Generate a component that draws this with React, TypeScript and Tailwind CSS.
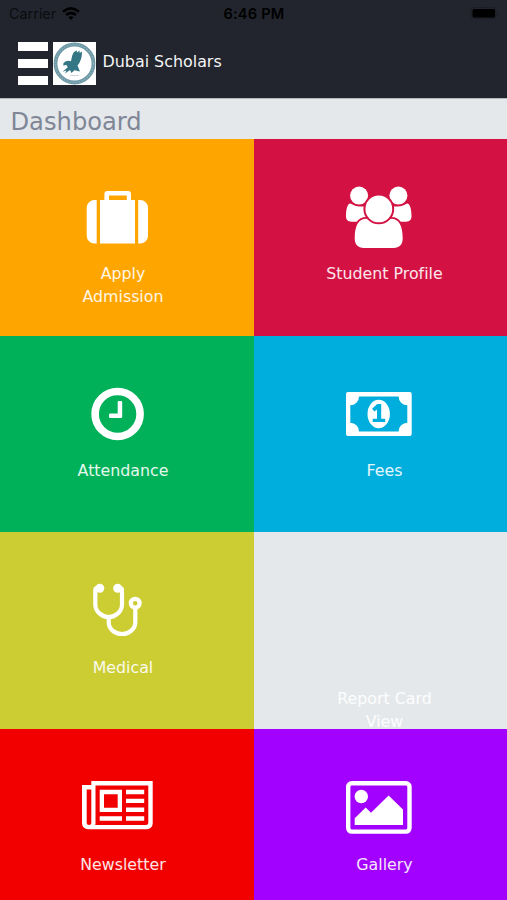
import type { ReactNode } from "react";

function SuitcaseIcon() {
  return (
    <svg viewBox="78 180 80 75" className="h-[75px] w-20" fill="#fff">
      <path fillRule="evenodd" d="M100 243.5V200h4.4v-6a2.9 2.9 0 0 1 2.9-2.9h20.8a2.9 2.9 0 0 1 2.9 2.9v6h4v43.5zM109 200h17.8v-4.5H109z" />
      <path d="M96.700 200v43.5h-2.2a7.8 7.8 0 0 1-7.8-7.8v-27.9a7.8 7.8 0 0 1 7.8-7.8zM138.200 200v43.5h2a7.8 7.8 0 0 0 7.8-7.8v-27.9a7.8 7.8 0 0 0-7.8-7.8z" />
    </svg>
  );
}

function UsersIcon() {
  return (
    <svg viewBox="339 180 80 75" className="h-[75px] w-20" fill="#fff">
      <circle cx="359.1" cy="195.6" r="9" />
      <circle cx="398.4" cy="195.6" r="9" />
      <path d="M350 203.500c-3 1-4 7-4 12.500c0 4 2 5.700 5.500 5.700h8.500c3-3.500 6-4 9-4l20 0c3 0 6 .5 9 4h8c3.500 0 5.500-1.700 5.500-5.700c0-5.500-1-11.500-4-12.500c-2 0-4 3-9.500 3h-38.500c-5.500 0-7.500-3-9.500-3z" />
      <path d="M366.500 218.800c-8 0-11.800 7-11.800 19.500c0 6.500 3.500 9.700 9 9.700h30c5.500 0 9-3.200 9-9.700c0-12.500-3.800-19.500-11.800-19.500c-2 0-5 4.500-12.200 4.500s-10.200-4.500-12.200-4.500z" stroke="#d31243" strokeWidth="3.600" paintOrder="stroke" />
      <circle cx="378.800" cy="208.900" r="13.400" stroke="#d31243" strokeWidth="4" paintOrder="stroke" />
    </svg>
  );
}

function ClockIcon() {
  return (
    <svg viewBox="78 377 80 75" className="h-[75px] w-20" fill="#fff">
      <circle cx="117.600" cy="414" r="22.500" fill="none" stroke="#fff" strokeWidth="7.600" />
      <path d="M118.800 401h2.200q1.200 0 1.200 1.200v14.600q0 1.200-1.200 1.200h-10.800q-1.200 0-1.200-1.200v-2q0-1.200 1.200-1.200h7.500v-11.400q0-1.200 1.100-1.200z" />
    </svg>
  );
}

function MoneyIcon() {
  return (
    <svg viewBox="339 377 80 75" className="h-[75px] w-20" fill="#fff">
      <path fillRule="evenodd" d="M348 392h61.700q2 0 2 2v40q0 2-2 2H348q-2 0-2-2v-40q0-2 2-2zM359 396.600a8.700 8.700 0 0 1-8.700 8.700v17.400a8.700 8.700 0 0 1 8.700 8.700h39.600a8.700 8.700 0 0 1 8.700-8.700v-17.400a8.700 8.700 0 0 1-8.700-8.700z" />
      <ellipse cx="378.700" cy="414" rx="11.200" ry="14.300" />
      <path d="M377.200 404h4v14.700h4v3.400h-12.500v-3.400h4.300v-9.200l-2.600 2.100-2.300-2.800z" fill="#00aedd" />
    </svg>
  );
}

function StethoscopeIcon() {
  return (
    <svg viewBox="78 574 80 75" className="h-[75px] w-20" fill="none" stroke="#fff" strokeWidth="4.200">
      <path d="M99.500 589.200h-2.200q-2 0-2 2v14.300c0 7 6.500 12.500 13.400 12.500s13.300-5.500 13.300-12.500v-14.300q0-2-2-2h-2" />
      <path d="M108.700 618.500v4.500c0 7 6 12 13.300 12s13.300-5 13.300-12v-14" />
      <circle cx="135.200" cy="604.200" r="4.400" />
      <circle cx="99.800" cy="589.200" r="4.500" fill="#fff" stroke="none" />
      <circle cx="117.700" cy="589.200" r="4.500" fill="#fff" stroke="none" />
    </svg>
  );
}

function NewspaperIcon() {
  return (
    <svg viewBox="78 770 80 75" className="h-[75px] w-20" fill="#fff">
      <path fillRule="evenodd" d="M91.300 781h61.400v42.500a5.800 5.800 0 0 1-5.800 5.800H88a6 6 0 0 1-6-6V785h9.300zM95.500 785.500v38q0 1-.4 1.600h50.900q2.300 0 2.300-2.300v-37.300zM86.700 789.500v33.500q0 2.100 2.300 2.100t2.300-2.100v-33.500z" />
      <path fillRule="evenodd" d="M99.700 789.800H122v22.300H99.700zM104 794.300v13.500h13.700v-13.500z" />
      <path d="M99.700 816.300H122v4.400H99.700zM126 789.800h18.200v4.400H126zM126 798.700h18.200v4.400H126zM126 807.600h18.200v4.400H126zM126 816.300h18.200v4.400H126z" />
    </svg>
  );
}

function PictureIcon() {
  return (
    <svg viewBox="339 770 80 75" className="h-[75px] w-20" fill="#fff">
      <rect x="348.200" y="783.300" width="61.300" height="48.300" rx="3.500" fill="none" stroke="#fff" strokeWidth="4.400" />
      <circle cx="361.300" cy="796.500" r="6.700" />
      <path d="M354.700 825v-6.700l11-10.900 5.300 5.300 17.600-17.300 14.400 14v15.600z" />
    </svg>
  );
}

function SchoolCrest() {
  return (
    <svg viewBox="0 0 43 43" className="h-[43px] w-[43px] shrink-0">
      <rect width="43" height="43" fill="#fff" />
      <circle cx="21.500" cy="21.500" r="19" fill="none" stroke="#6d98a5" strokeWidth="3.800" />
      <circle cx="21.500" cy="21.500" r="19" fill="none" stroke="#8fb1bb" strokeWidth="1.400" strokeDasharray="1.500 1.500" />
      <path d="M20.500 10.500L23.500 8.200L24 10.500L26.500 8.500L26.700 11L29 9.500Q29.200 18 24.500 23.500L27 29.500L21.500 28.200L18.500 31L17 28L12 31.500L13.500 28.500L9.500 29.800L14.800 25.300L13.200 22.800L10.300 23.800L10.500 21Q13.500 18 18 19.200Q18.500 14 20.500 10.500Z" fill="#357684" />
      <path d="M17.500 33.500h8" stroke="#a9bac0" strokeWidth="1" strokeDasharray="1 .7" />
    </svg>
  );
}

function StatusBar() {
  return (
    <div className="grid h-7 grid-cols-3 items-center pr-2 pl-[9px] font-['Inter',sans-serif] text-black">
      <div className="flex items-center gap-[6px]">
        <span className="text-[14.400px] text-[#0b0c10]">Carrier</span>
        <svg viewBox="0 0 18 13" className="h-[13px] w-[18px]" fill="none" stroke="#000" strokeWidth="2.700">
          <path d="M1 4.800Q9-2 17 4.800M4 8Q9 4 14 8" />
          <path d="M6.300 10.200Q9 8.300 11.700 10.200L9 12.900z" fill="#000" stroke="none" />
        </svg>
      </div>
      <span className="pt-0.5 text-center text-[14.600px] font-semibold tracking-[0.2px]">6:46 PM</span>
      <svg viewBox="0 0 30 14" className="h-3.5 w-[30px] justify-self-end">
        <rect x="2" y=".5" width="25" height="11" rx="3" fill="none" stroke="#1c1e25" />
        <rect x="3.500" y="2" width="22.500" height="8.500" rx="1.500" fill="#000" />
        <path d="M28.500 4.700q1.500 1.800 0 3.600z" fill="#1c1e25" />
      </svg>
    </div>
  );
}

function Tile({ color, icon, label, className = "" }: { color: string; icon?: ReactNode; label: string; className?: string }) {
  return (
    <div className={`flex flex-col items-start overflow-hidden pt-[41px] ${color} ${className}`}>
      <div className="flex w-[246px] flex-col items-center">
        <div className="mr-[11px] h-[75px] w-20 shrink-0">{icon}</div>
        <p className="mt-[7px] w-[124px] text-center text-[15.800px] leading-[23px] text-white/90 [font-variant-ligatures:none]">{label}</p>
      </div>
    </div>
  );
}

export default function App() {
  return (
    <main className="flex h-[900px] w-[507px] flex-col overflow-hidden bg-[#e4e8eb] font-['DejaVu_Sans',sans-serif]">
      <header className="h-[98px] shrink-0 bg-[#22252d]">
        <StatusBar />
        <div className="flex h-[70px] items-start pt-3.5 pl-[18px]">
          <div className="flex h-[43px] w-[30px] flex-col justify-between">
            <span className="h-[9px] bg-white" />
            <span className="h-[9px] bg-white" />
            <span className="h-[9px] bg-white" />
          </div>
          <div className="ml-[5px]">
            <SchoolCrest />
          </div>
          <span className="mt-2 ml-[6.500px] text-[15.900px] leading-6 text-[#f3f4f5]">Dubai Scholars</span>
        </div>
      </header>
      <h1 className="h-[41px] shrink-0 border-t border-[#b6b8bd] pl-[10.500px] text-[24.200px] leading-[47px] text-[#7f8696]">Dashboard</h1>
      <div className="grid grow grid-cols-[254px_253px] grid-rows-[197px_196px_197px_171px]">
        <Tile color="bg-[#ffa500]" icon={<SuitcaseIcon />} label="Apply Admission" />
        <Tile color="bg-[#d31243]" icon={<UsersIcon />} label="Student Profile" className="pl-[7.500px]" />
        <Tile color="bg-[#00b159]" icon={<ClockIcon />} label="Attendance" />
        <Tile color="bg-[#00aedd]" icon={<MoneyIcon />} label="Fees" className="pl-[7.500px]" />
        <Tile color="bg-[#cccc33]" icon={<StethoscopeIcon />} label="Medical" className="[&_p]:pt-px" />
        <Tile color="bg-[#e4e8eb]" label="Report Card View" className="mt-[31px] pl-[7.500px] [&_p]:pt-px" />
        <Tile color="bg-[#f20000]" icon={<NewspaperIcon />} label="Newsletter" className="[&_p]:pt-px" />
        <Tile color="bg-[#a200ff]" icon={<PictureIcon />} label="Gallery" className="pl-[7.500px] [&_p]:pt-px" />
      </div>
    </main>
  );
}
